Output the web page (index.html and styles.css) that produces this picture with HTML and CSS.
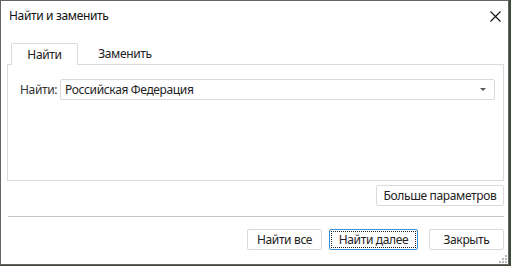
FILE: index.html
```html
<!DOCTYPE html>
<html lang="ru">
<head>
    <meta charset="UTF-8">
    <title>Найти и заменить</title>
    <link rel="stylesheet" href="styles.css">
</head>
<body>
    <div class="window">
        <div class="titlebar">
            <span class="title">Найти и заменить</span>
            <svg class="close" width="11" height="11" viewBox="0 0 11 11">
                <path d="M0.5 0.5 L10.5 10.5 M10.5 0.5 L0.5 10.5" stroke="#111" stroke-width="1.1" fill="none"/>
            </svg>
        </div>

        <div class="tabs">
            <div class="tab active">Найти</div>
            <div class="tab">Заменить</div>
        </div>

        <div class="panel">
            <div class="field">
                <label class="field-label">Найти:</label>
                <div class="combo">
                    <span class="combo-value">Российская Федерация</span>
                    <span class="combo-arrow"></span>
                </div>
            </div>
        </div>

        <div class="more-row">
            <button class="btn btn-more">Больше параметров</button>
        </div>

        <div class="separator"></div>

        <div class="footer">
            <button class="btn btn-all">Найти все</button>
            <button class="btn btn-next focused"><span class="focus-rect">Найти далее</span></button>
            <button class="btn btn-close">Закрыть</button>
        </div>

        <div class="grip">
            <span></span><span></span><span></span>
            <span></span><span></span><span></span>
        </div>
    </div>
</body>
</html>
```

FILE: styles.css
```css
:root {
    --border: #dadada;
    --text: #1e1e1e;
}

html, body {
    margin: 0;
    padding: 0;
    background: #3d4a3a;
    font-family: "Noto Sans", "Open Sans", sans-serif;
    font-size: 12px;
    letter-spacing: -0.35px;
    color: var(--text);
}

.window {
    width: 509px;
    height: 265px;
    box-sizing: border-box;
    border: 1px solid #646464;
    background: #fff;
    display: flex;
    flex-direction: column;
    position: relative;
}

.titlebar {
    height: 30px;
    display: flex;
    align-items: center;
    justify-content: space-between;
    padding: 0 7px 1px 8px;
}

.title {
    color: #111;
    line-height: 16px;
}

.close {
    margin-top: 1px;
}

.tabs {
    display: flex;
    align-items: flex-end;
    margin: 11px 0 0 10px;
    height: 22px;
    position: relative;
    z-index: 1;
}

.tab {
    height: 21px;
    line-height: 20px;
    text-align: center;
    color: #222;
}

.tab.active {
    width: 67px;
    height: 22px;
    border: 1px solid var(--border);
    border-bottom: none;
    border-radius: 2px 2px 0 0;
    background: #fff;
    box-sizing: border-box;
    line-height: 21px;
}

.tab:not(.active) {
    width: 94px;
}

.panel {
    margin: -1px 0 0 6px;
    width: 497px;
    height: 117px;
    box-sizing: border-box;
    border: 1px solid var(--border);
    padding: 14px 8px 0 12px;
}

.field {
    display: flex;
    align-items: center;
}

.field-label {
    width: 40px;
    color: #333;
}

.combo {
    flex: 1;
    height: 21px;
    box-sizing: border-box;
    border: 1px solid var(--border);
    border-radius: 2px;
    display: flex;
    align-items: center;
    justify-content: space-between;
    padding: 0 8px 0 4px;
}

.combo-arrow {
    width: 0;
    height: 0;
    border-left: 3px solid transparent;
    border-right: 3px solid transparent;
    border-top: 3px solid #555;
}

.more-row {
    display: flex;
    justify-content: flex-end;
    padding-right: 4px;
    margin-top: 4px;
}

.btn {
    font: inherit;
    letter-spacing: inherit;
    color: #222;
    background: #fff;
    border: 1px solid var(--border);
    border-radius: 2px;
    height: 21px;
    padding: 0;
    box-sizing: border-box;
}

.btn-more {
    width: 128px;
}

.separator {
    margin: 10px 4px 0 7px;
    height: 1px;
    background: #c4c4c4;
}

.footer {
    display: flex;
    justify-content: flex-end;
    padding-right: 4px;
    margin-top: 12px;
}

.btn-all {
    width: 75px;
}

.btn-next {
    width: 89px;
    margin-left: 7px;
    border-color: #3c8fd2;
    padding: 1px;
}

.focus-rect {
    display: block;
    height: 100%;
    box-sizing: border-box;
    border: 1px dotted #222;
    line-height: 15px;
}

.btn-close {
    width: 75px;
    margin-left: 11px;
}

.grip {
    position: absolute;
    right: 1px;
    bottom: 1px;
    width: 8px;
    height: 8px;
}

.grip span {
    position: absolute;
    width: 2px;
    height: 2px;
    background: #b8b8b8;
}

.grip span:nth-child(1) { right: 0; bottom: 0; }
.grip span:nth-child(2) { right: 3px; bottom: 0; }
.grip span:nth-child(3) { right: 6px; bottom: 0; }
.grip span:nth-child(4) { right: 0; bottom: 3px; }
.grip span:nth-child(5) { right: 3px; bottom: 3px; }
.grip span:nth-child(6) { right: 0; bottom: 6px; }
```
